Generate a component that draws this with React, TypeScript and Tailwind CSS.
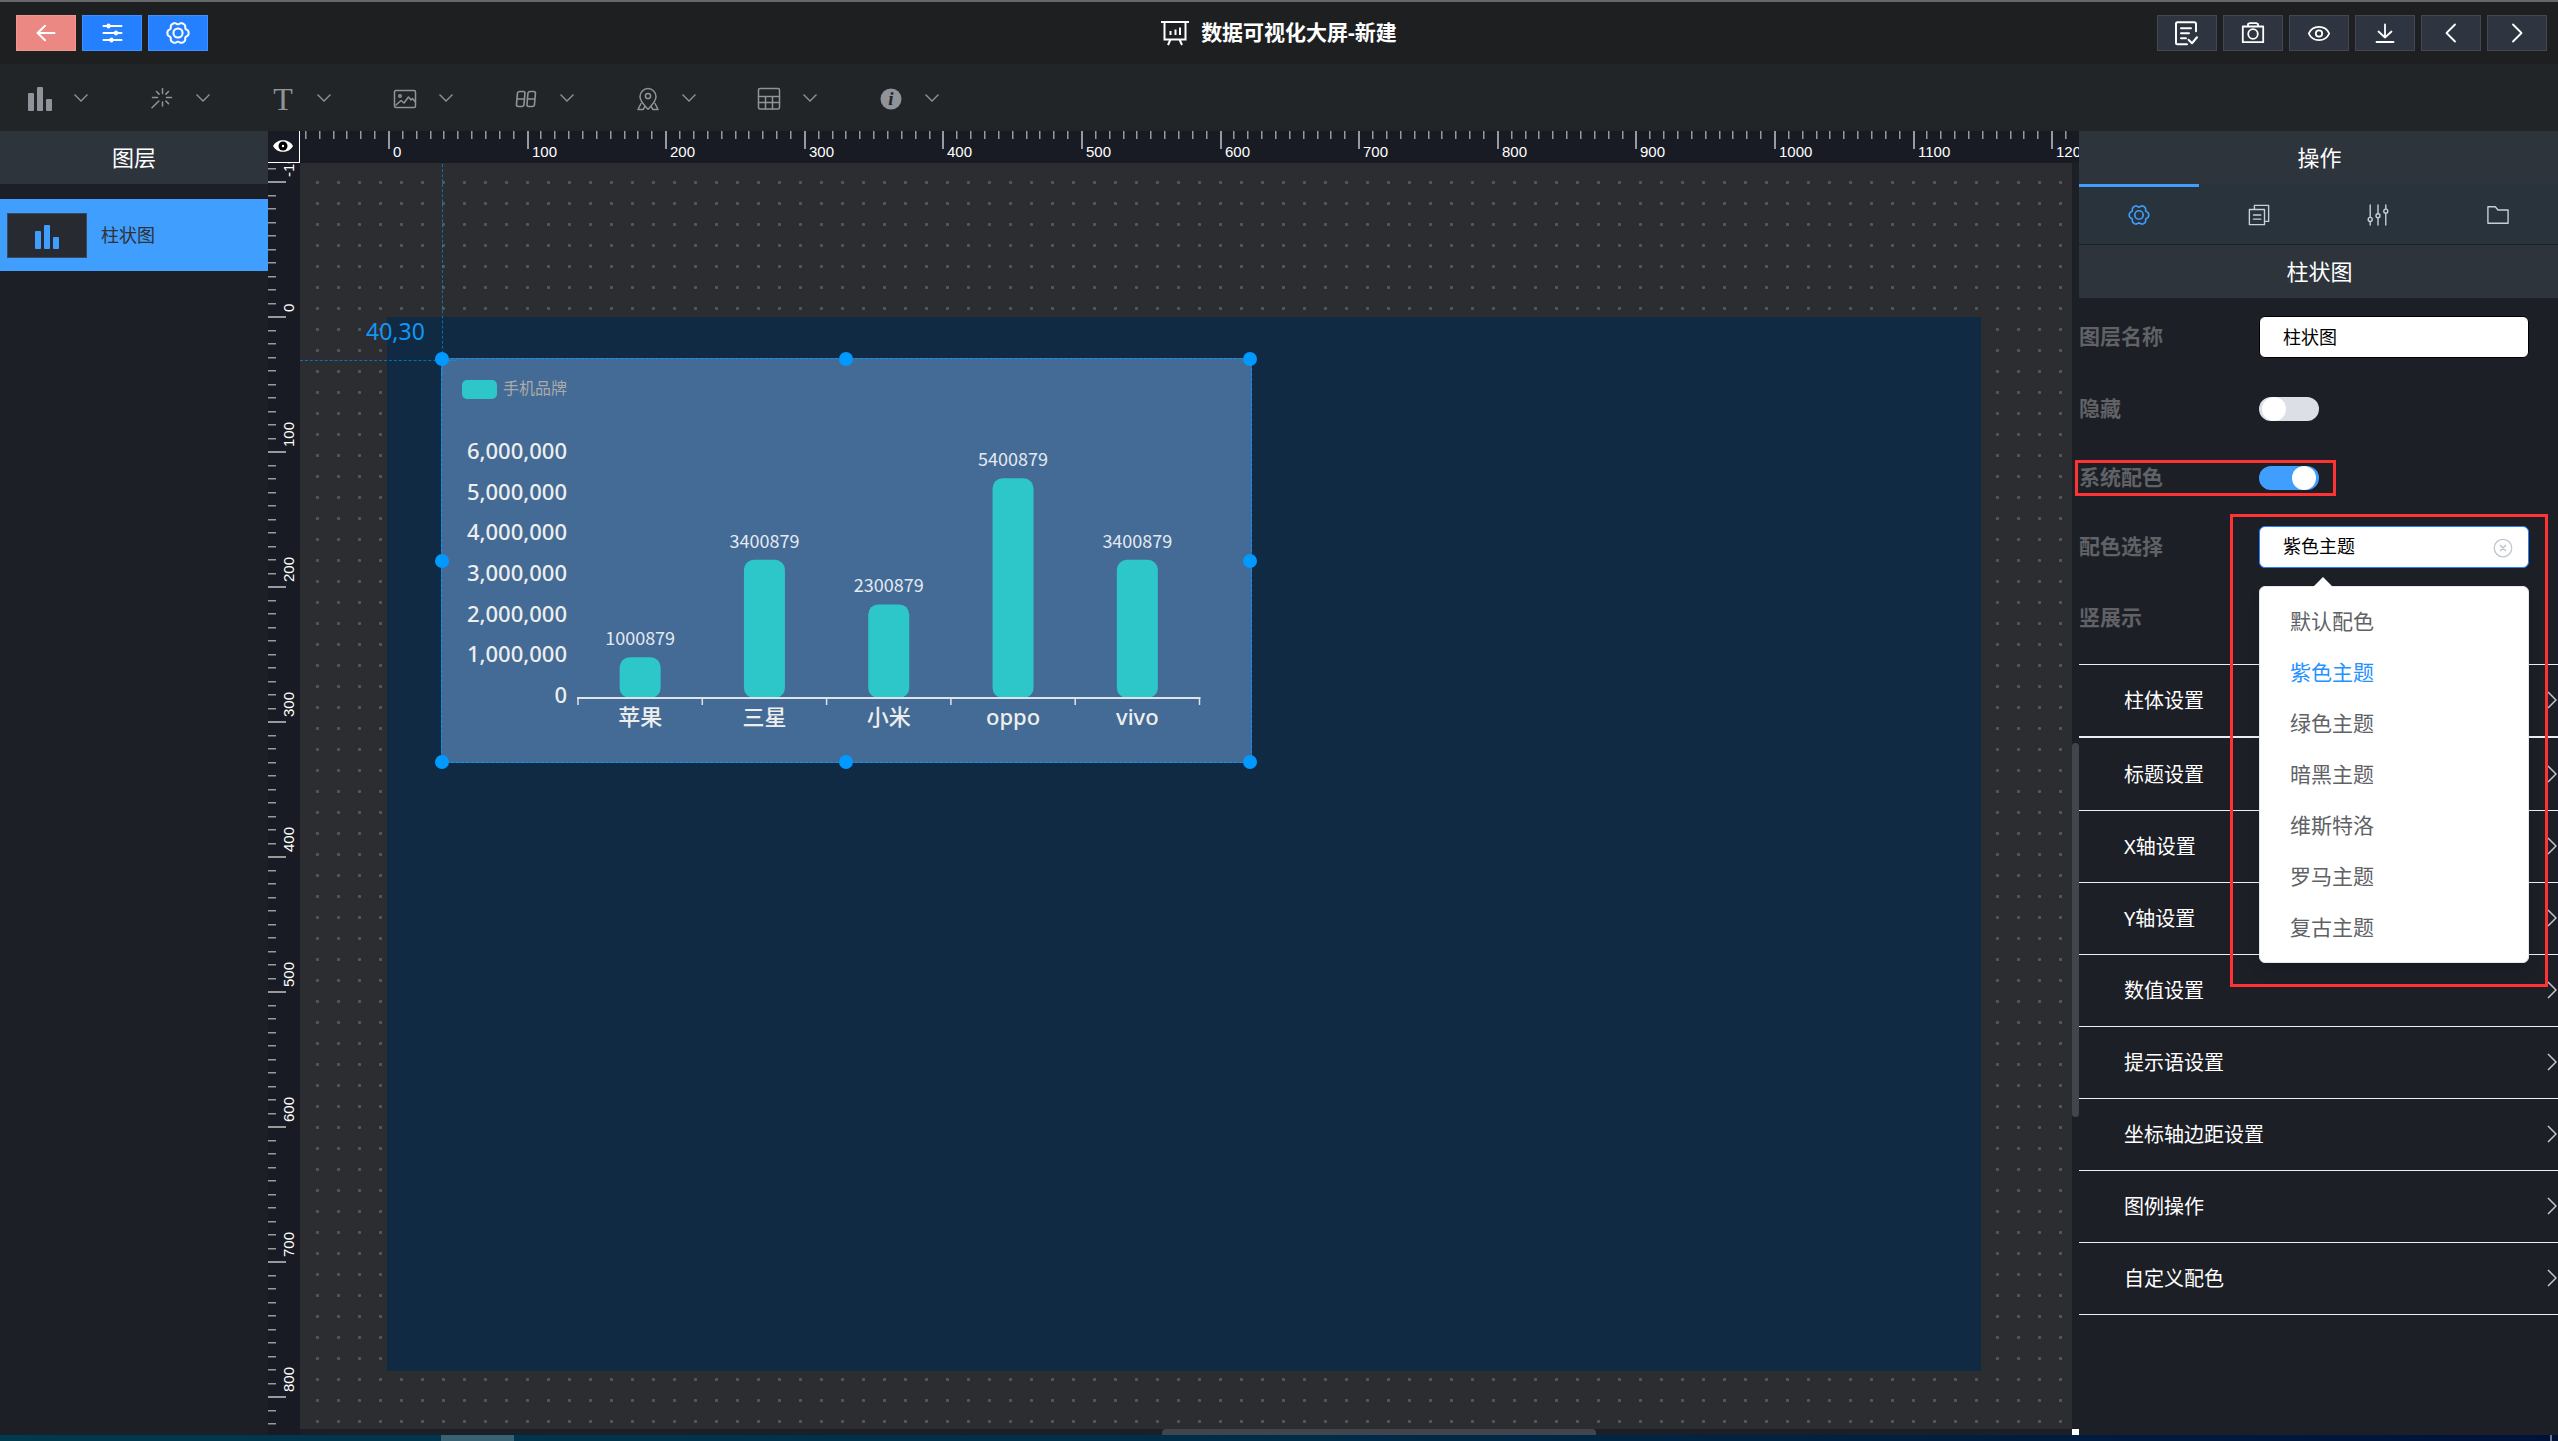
import { useState } from 'react';
import type { ReactNode } from 'react';

type IconProps = { children: ReactNode; className?: string; stroke?: number };

function Icon({ children, className = 'size-6', stroke = 2 }: IconProps) {
  return (
    <svg
      viewBox="0 0 24 24"
      className={className}
      fill="none"
      stroke="currentColor"
      strokeWidth={stroke}
      strokeLinecap="round"
      strokeLinejoin="round"
      aria-hidden="true"
    >
      {children}
    </svg>
  );
}

// six rounded teeth with a notch between each pair
function gearPath() {
  const points: string[] = [];
  for (let deg = 0; deg < 360; deg += 4) {
    const rad = (deg * Math.PI) / 180;
    const notch = Math.pow((1 - Math.cos(6 * rad)) / 2, 2);
    const r = 10.6 - 2 * notch;
    points.push(`${(12 + r * Math.cos(rad)).toFixed(2)} ${(12 + r * Math.sin(rad)).toFixed(2)}`);
  }
  return `M${points.join('L')}Z`;
}

function GearIcon({ stroke = 2, className = 'size-6' }: { stroke?: number; className?: string }) {
  return (
    <Icon stroke={stroke} className={className}>
      <path d={gearPath()} />
      <circle cx="12" cy="12" r="4.6" />
    </Icon>
  );
}

function BarsIcon({ className = 'size-7' }: { className?: string }) {
  return (
    <svg viewBox="0 0 28 28" className={className} fill="currentColor" aria-hidden="true">
      <rect x="2" y="8" width="6" height="18" rx="1" />
      <rect x="11" y="2" width="6" height="24" rx="1" />
      <rect x="20" y="14" width="6" height="12" rx="1" />
    </svg>
  );
}

const tools = [
  { label: '图表', icon: <BarsIcon /> },
  {
    label: '特效',
    icon: (
      <Icon stroke={1.5}>
        <path d="M12.5 1.5v5M12.5 15v4M2.5 10.5h5M16.5 10.5h5M6.5 4.5l2.6 2.6M18.5 4.5l-2.6 2.6M15.9 14l2.6 2.6M8.9 14 2 20.8" />
      </Icon>
    ),
  },
  { label: '文本', icon: <span className="font-[Liberation_Serif,serif] text-[32px] leading-6">T</span> },
  {
    label: '图片',
    icon: (
      <Icon stroke={1.5}>
        <rect x="1.5" y="3.5" width="21" height="17" rx="1.5" />
        <circle cx="7" cy="9" r="1.3" />
        <path d="m3 18 5-4.5 3 2.5 4.5-6 2.5 3 1.5-1.5 2.5 3" />
      </Icon>
    ),
  },
  {
    label: '数字',
    icon: (
      <Icon stroke={1.6}>
        <g transform="translate(1.5 0) skewX(-5)">
          <rect x="2.5" y="4.5" width="7.5" height="15" rx="2" />
          <rect x="13" y="4.5" width="7.5" height="15" rx="2" />
          <path d="M3 12h6.5M13.5 12H20" />
        </g>
      </Icon>
    ),
  },
  {
    label: '地图',
    icon: (
      <Icon stroke={1.5}>
        <path d="M12 22.2c-3-3.4-8-7.4-8-12.6a8 8 0 0 1 16 0c0 5.2-5 9.2-8 12.6Z" />
        <circle cx="12" cy="9" r="2.6" />
        <path d="M5 16.5 2 22.5h5l2-3M19 16.5l3 6h-5l-2-3" />
      </Icon>
    ),
  },
  {
    label: '表格',
    icon: (
      <Icon stroke={1.5}>
        <rect x="1.5" y="1.5" width="21" height="20.5" rx="1.5" />
        <path d="M1.5 9.5h21M1.5 15.5h21M8.5 9.5V22M15.5 9.5V22" />
      </Icon>
    ),
  },
  {
    label: '信息',
    icon: (
      <svg viewBox="0 0 24 24" className="size-6" aria-hidden="true">
        <circle cx="12" cy="12" r="10.5" fill="currentColor" />
        <text x="12" y="18" textAnchor="middle" className="fill-[#222527] font-[Liberation_Serif,serif] text-[19px] font-bold italic">
          i
        </text>
      </svg>
    ),
  },
];

const actions = [
  {
    label: '保存',
    icon: (
      <Icon className="size-7">
        <path
          d="M23 14V6.5A1.5 1.5 0 0 0 21.5 5h-17A1.5 1.5 0 0 0 3 6.5v19A1.5 1.5 0 0 0 4.500 27H14M8 11h10M8 16h8M8 21h5M15.5 22.5 19 26l5-6"
          transform="translate(0 -1.5) scale(.857)"
        />
      </Icon>
    ),
  },
  {
    label: '截图',
    icon: (
      <Icon stroke={1.8}>
        <path d="M1.8 5.5h20.4v15.7H1.8zM7 5.5V3l1.5-.8h7L17 3v2.5" />
        <circle cx="12" cy="13" r="4.8" />
      </Icon>
    ),
  },
  {
    label: '预览',
    icon: (
      <Icon stroke={1.8}>
        <path d="M1.8 12.5C3.5 8.5 7.5 5.8 12 5.8s8.5 2.7 10.2 6.7c-1.7 4-5.7 6.7-10.2 6.7S3.5 16.5 1.8 12.5Z" />
        <circle cx="12" cy="12.5" r="3.2" />
      </Icon>
    ),
  },
  { label: '下载', icon: <Icon stroke={1.8}><path d="M12 3.5v13M5.5 10.5l6.5 6 6.5-6M3.5 21h17" /></Icon> },
  { label: '撤销', icon: <Icon stroke={1.8}><path d="M16 3.5 7.5 12l8.5 8.5" /></Icon> },
  { label: '重做', icon: <Icon stroke={1.8}><path d="m8 3.5 8.5 8.5L8 20.5" /></Icon> },
];

function Header() {
  return (
    <header className="grid h-16 shrink-0 grid-cols-[1fr_auto_1fr] items-center border-t-2 border-[#666769] bg-[#1e1f21] text-white">
      <div className="ml-4 flex gap-1.5">
        <button aria-label="返回" className="flex h-9 w-15 items-center justify-center border border-[#f29490] bg-[#ec8884]">
          <Icon><path d="M20.5 12h-17M11 4.8 3.6 12l7.4 7.2" /></Icon>
        </button>
        <button aria-label="图层" className="flex h-9 w-15 items-center justify-center border border-[#3d90ff] bg-[#2580ff]">
          <Icon>
            <path d="M3.5 5h18M3.5 12h18M3.5 19h18" />
            <path d="M8.5 4.5v1M16 11.5v1M11.5 18.5v1" strokeWidth="4" />
          </Icon>
        </button>
        <button aria-label="设置" className="flex h-9 w-15 items-center justify-center border border-[#3d90ff] bg-[#2580ff]">
          <GearIcon />
        </button>
      </div>
      <h1 className="flex items-center gap-3 text-[21px] font-bold">
        <svg viewBox="0 0 28 28" className="size-7" fill="none" stroke="currentColor" strokeWidth="2" aria-hidden="true">
          <path d="M0 3h28M3.5 3v17.5h21V3M9.5 20.5 7 26M18.5 20.5 21 26M9.5 12v4M14.5 10.5V16M19 8.5V16" />
        </svg>
        数据可视化大屏-新建
      </h1>
      <div className="mr-[11px] flex justify-end gap-1.5">
        {actions.map((a) => (
          <button key={a.label} aria-label={a.label} className="flex h-9 w-15 items-center justify-center border border-[#444752] bg-[#2f3540]">
            {a.icon}
          </button>
        ))}
      </div>
    </header>
  );
}

function Toolbar() {
  return (
    <nav className="h-[67px] shrink-0 bg-[#222527] pt-0.5 text-[#909399]">
      <div className="grid h-full w-[972px] grid-cols-8">
        {tools.map((t) => (
          <button key={t.label} aria-label={t.label} className="flex items-center pl-6">
            <span className="flex w-8 justify-center">{t.icon}</span>
            <svg viewBox="0 0 14 8" className="mb-0.5 ml-[18px] h-2 w-3.5" fill="none" stroke="currentColor" strokeWidth="1.3" aria-hidden="true">
              <path d="M.5.5 7 7 13.5.5" />
            </svg>
          </button>
        ))}
      </div>
    </nav>
  );
}

function LayerPanel() {
  return (
    <aside className="w-67 shrink-0 bg-[#1d1f27]">
      <h2 className="flex h-[53px] items-center justify-center bg-[#2d343c] text-[22px] text-white">图层</h2>
      <button className="mt-[15px] flex h-18 w-full items-center gap-3.5 bg-[#409eff] pl-[7px] text-lg text-[#303133]">
        <span className="flex h-[45px] w-20 items-center justify-center border border-[#3a4a5e] bg-[#282a31] pt-1 text-[#409eff]">
          <BarsIcon />
        </span>
        柱状图
      </button>
    </aside>
  );
}

const ticks = (from: number, to: number) => Array.from({ length: to - from }, (_, i) => i + from);

function HorizontalRuler() {
  return (
    <svg className="h-8 min-w-0 flex-1 bg-[#191b24]" aria-hidden="true">
      {ticks(-6, 129).map((i) => {
        const x = Math.round(88 + i * 13.86);
        const major = i % 10 === 0;
        return (
          <g key={i}>
            <rect x={x} y="0" width={major ? 2 : 1.5} height={major ? 18 : 8} fill="#98999d" />
            {major && (
              <text x={x + 5} y="26" fill="#ffffff" className="font-[Liberation_Sans,sans-serif] text-[15px]">
                {i * 10}
              </text>
            )}
          </g>
        );
      })}
    </svg>
  );
}

function VerticalRuler() {
  return (
    <svg className="min-h-0 w-8 flex-1 bg-[#191b24]" aria-hidden="true">
      {ticks(-11, 83).map((i) => {
        const y = Math.round(153 + i * 13.5);
        const major = i % 10 === 0;
        return (
          <g key={i}>
            <rect x="0" y={y} width={major ? 18 : 8} height={major ? 2 : 1.5} fill="#98999d" />
            {major && (
              <text transform={`translate(26 ${y - 4}) rotate(-90)`} fill="#ffffff" className="font-[Liberation_Sans,sans-serif] text-[15px]">
                {i * 10}
              </text>
            )}
          </g>
        );
      })}
    </svg>
  );
}

const sales = [
  { name: '苹果', value: 1000879 },
  { name: '三星', value: 3400879 },
  { name: '小米', value: 2300879 },
  { name: 'oppo', value: 5400879 },
  { name: 'vivo', value: 3400879 },
];

function BarChart() {
  const left = 136;
  const base = 339;
  const plotHeight = 244;
  const step = 124.3;
  const max = 6000000;
  return (
    <svg viewBox="0 0 809 403" className="size-full" role="img" aria-label="手机品牌">
      <rect x="20" y="21" width="35" height="19" rx="5" fill="#2ec7c9" />
      <text x="61" y="35" fill="#aaaaaa" className="text-base">手机品牌</text>
      {[6, 5, 4, 3, 2, 1, 0].map((m) => (
        <text key={m} x="125" y={base + 5 - (m / 6) * plotHeight} textAnchor="end" fill="#eeeeee" className="text-[22px] font-medium">
          {(m * 1000000).toLocaleString('en-US')}
        </text>
      ))}
      {sales.map((s, i) => {
        const x = left + step * (i + 0.5);
        const h = (s.value / max) * plotHeight;
        return (
          <g key={s.name}>
            <rect x={x - 20.5} y={base - h} width="41" height={h} rx="10" fill="#2ec7c9" />
            <text x={x} y={base - h - 12} textAnchor="middle" fill="#e3e9f2" className="font-[Noto_Sans_CJK_SC,sans-serif] text-lg">
              {s.value}
            </text>
            <text x={x} y={base + 27} textAnchor="middle" fill="#eeeeee" className="text-[22px] font-medium">{s.name}</text>
          </g>
        );
      })}
      <path d={`M${left - 1} ${base}H${left + step * 5 + 1}`} stroke="#dfe4ea" strokeWidth="2" />
      {[0, 1, 2, 3, 4, 5].map((i) => (
        <path key={i} d={`M${left + step * i} ${base}v7`} stroke="#dfe4ea" strokeWidth="1.5" />
      ))}
    </svg>
  );
}

const handles = [
  'left-0 top-0',
  'left-[404px] top-0',
  'left-[808px] top-0',
  'left-0 top-1/2',
  'left-[808px] top-1/2',
  'left-0 top-full',
  'left-[404px] top-full',
  'left-[808px] top-full',
];

function Canvas() {
  return (
    <div className="relative min-w-0 flex-1 overflow-hidden bg-[#2b2d31] bg-[radial-gradient(circle_at_center,#4e595e_1.3px,transparent_2px)] bg-[length:21px_21px] bg-[position:7px_9px] pt-[154px] pr-[91px] pb-[58px] pl-[87px]">
      <div className="relative h-full bg-[#0f2a42]">
        {/* selected chart with its guides */}
        <div className="absolute top-[41px] left-[54px] h-[405px] w-[811px] border border-dashed border-[#0099ff] bg-[#436b95]">
          <BarChart />
          <span className="absolute -top-[195px] left-0 h-[210px] border-l border-dashed border-[#0099ff]/60" />
          <span className="absolute top-px -left-[142px] w-[156px] border-t border-dashed border-[#0099ff]/60" />
          <span className="absolute -top-[45px] -left-[76px] text-[23px] text-[#1296f8]">40,30</span>
          {handles.map((pos) => (
            <span key={pos} className={`absolute size-3.5 -translate-x-1/2 -translate-y-1/2 rounded-full bg-[#0099ff] ${pos}`} />
          ))}
        </div>
      </div>
    </div>
  );
}

function Workspace() {
  return (
    <main className="flex min-w-0 flex-1 flex-col bg-[#1d1f27]">
      <div className="flex h-8 shrink-0">
        <button aria-label="显示参考线" className="flex w-8 items-center justify-center border-r border-b border-white bg-[#191b24] pr-0.5 pb-0.5">
          <svg viewBox="0 0 22 14" className="h-3.5 w-5.5" aria-hidden="true">
            <path d="M1 7C5-.8 17-.8 21 7 17 14.8 5 14.8 1 7Z" fill="#fff" />
            <circle cx="11" cy="7" r="4.5" fill="#000" />
            <circle cx="11" cy="7" r="1.2" fill="#fff" />
          </svg>
        </button>
        <HorizontalRuler />
      </div>
      <div className="flex min-h-0 flex-1">
        <div className="flex w-8 shrink-0 flex-col">
          <VerticalRuler />
        </div>
        <div className="flex min-w-0 flex-1 flex-col">
          <div className="flex min-h-0 flex-1">
            <Canvas />
            <div className="w-[7px] shrink-0 pt-[580px]">
              <div className="h-[374px] rounded-full bg-[#42454c]" />
            </div>
          </div>
          <div className="flex h-1.5 shrink-0 justify-between">
            <div className="ml-[862px] w-[434px] rounded-t-sm bg-[#42454c]" />
            <div className="w-[7px] bg-white" />
          </div>
        </div>
      </div>
    </main>
  );
}

function Switch({ id, defaultChecked }: { id: string; defaultChecked?: boolean }) {
  return (
    <span className="relative flex h-6 w-15">
      <input
        id={id}
        type="checkbox"
        role="switch"
        defaultChecked={defaultChecked}
        className="peer h-6 w-15 appearance-none rounded-full bg-[#dcdfe6] checked:bg-[#409eff]"
      />
      <span className="pointer-events-none absolute top-0 left-[3px] size-6 rounded-full bg-white peer-checked:left-[33px]" />
    </span>
  );
}

function Field({ id, label, className = '', children }: { id: string; label: string; className?: string; children?: ReactNode }) {
  return (
    <div className={`relative flex h-[42px] items-center ${className}`}>
      <label htmlFor={id} className="w-45 text-[21px] font-bold text-[#606266]">{label}</label>
      {children}
    </div>
  );
}

const themes = ['默认配色', '紫色主题', '绿色主题', '暗黑主题', '维斯特洛', '罗马主题', '复古主题'];

function ThemeSelect({ id }: { id: string }) {
  const [theme, setTheme] = useState('紫色主题');
  return (
    <div className="relative w-[270px]">
      <select
        id={id}
        value={theme}
        onChange={(e) => setTheme(e.target.value)}
        className="block h-[42px] w-full appearance-none rounded-md border border-[#2580ff] bg-white px-[23px] pb-0.5 text-lg text-black"
      >
        {themes.map((t) => <option key={t}>{t}</option>)}
      </select>
      <button aria-label="清除" className="absolute top-3 right-4 text-[#c0c4cc]">
        <Icon className="size-5" stroke={1.5}>
          <circle cx="12" cy="12" r="10.5" />
          <path d="m9 9 6 6M15 9l-6 6" strokeWidth="2" />
        </Icon>
      </button>
      <div className="absolute top-15 left-0 z-10 w-full rounded-md border border-[#e4e7ed] bg-white py-[9px] shadow-lg">
        <span className="absolute -top-[7px] left-14 size-3.5 rotate-45 bg-white" />
        <ul role="listbox" aria-label="配色选择" className="relative">
          {themes.map((t) => (
            <li
              key={t}
              role="option"
              aria-selected={t === theme}
              onClick={() => setTheme(t)}
              className={`flex h-[51px] items-center pt-px pl-[30px] text-[21px] ${t === theme ? 'text-[#2590ff]' : 'text-[#606266]'}`}
            >
              {t}
            </li>
          ))}
        </ul>
      </div>
    </div>
  );
}

function Section({ title }: { title: string }) {
  return (
    <button className="flex h-18 w-full items-center justify-between border-b border-[#ebeef5] pl-[45px] text-xl text-white">
      {title}
      <svg viewBox="0 0 10 18" className="mr-px mb-0.5 h-[18px] w-2.5" fill="none" stroke="#c5c8ce" strokeWidth="1.5" aria-hidden="true">
        <path d="m1 1 8 8-8 8" />
      </svg>
    </button>
  );
}

const tabs = [
  { label: '配置', icon: <GearIcon stroke={1.8} className="size-[22px]" /> },
  {
    label: '数据',
    icon: (
      <Icon className="size-[22px]" stroke={1.5}>
        <path d="M1.5 6H18v16.5H1.5zM7 6V1.5h15.5V19H18M6 12h8M6 16.5h8" />
      </Icon>
    ),
  },
  {
    label: '交互',
    icon: (
      <Icon className="size-[22px]" stroke={1.5}>
        <path d="M3.5 1v13.5M3.5 19v4M12 1v9.5M12 15v8M20.5 1v4.5M20.5 10v13" />
        <circle cx="3.5" cy="16.8" r="2.2" />
        <circle cx="12" cy="12.8" r="2.2" />
        <circle cx="20.5" cy="7.8" r="2.2" />
      </Icon>
    ),
  },
  { label: '参数', icon: <Icon className="size-[22px]" stroke={1.5}><path d="M1 3h8l3 3.5h11V21H1z" /></Icon> },
];

function SettingsPanel() {
  return (
    <aside className="w-[479px] shrink-0 bg-[#1d1f27]">
      <h2 className="flex h-[53px] items-center justify-center bg-[#2d343c] pl-0.5 text-[22px] text-white">操作</h2>
      <div role="tablist" className="grid h-[61px] grid-cols-4 border-b border-[#1d1f27] bg-[#28333b]">
        {tabs.map((t, i) => (
          <button
            key={t.label}
            role="tab"
            aria-label={t.label}
            aria-selected={i === 0}
            className={`flex items-center justify-center border-t-[3px] pb-0.5 ${i === 0 ? 'border-[#409eff] text-[#409eff]' : 'border-transparent text-[#c8d0d8]'}`}
          >
            {t.icon}
          </button>
        ))}
      </div>
      <h3 className="flex h-[53px] items-center justify-center bg-[#2d343c] pl-0.5 text-[22px] text-white">柱状图</h3>
      <form className="flex flex-col gap-7 pt-[18px] pb-[26px]">
        <Field id="layer-name" label="图层名称">
          <input
            id="layer-name"
            defaultValue="柱状图"
            className="h-[42px] w-[270px] rounded-md border border-black bg-white px-[23px] pb-0.5 text-lg text-black"
          />
        </Field>
        <Field id="hidden" label="隐藏" className="pt-1">
          <Switch id="hidden" />
        </Field>
        <Field id="system-color" label="系统配色" className="pt-0.5">
          <Switch id="system-color" defaultChecked />
          <span className="pointer-events-none absolute top-1 -left-1 h-9 w-[261px] border-3 border-[#ff3333]" />
        </Field>
        <Field id="theme" label="配色选择">
          <ThemeSelect id="theme" />
          <span className="pointer-events-none absolute -top-3 left-[151px] z-20 h-[473px] w-[318px] border-3 border-[#ff3333]" />
        </Field>
        <Field id="vertical" label="竖展示" className="pt-0.5">
          <Switch id="vertical" />
        </Field>
      </form>
      <div className="border-t border-[#ebeef5]">
        <Section title="柱体设置" />
      </div>
      <div className="border-t border-[#ebeef5] pt-px">
        {['标题设置', 'X轴设置', 'Y轴设置', '数值设置', '提示语设置', '坐标轴边距设置', '图例操作', '自定义配色'].map((t) => (
          <Section key={t} title={t} />
        ))}
      </div>
    </aside>
  );
}

export default function App() {
  return (
    <div className="flex h-screen flex-col overflow-hidden bg-[#1d1f27] font-['Noto_Sans','Noto_Sans_CJK_SC',sans-serif]">
      <Header />
      <Toolbar />
      <div className="flex min-h-0 flex-1">
        <LayerPanel />
        <Workspace />
        <SettingsPanel />
      </div>
      <footer className="flex h-1.5 shrink-0 justify-between bg-linear-to-r from-[#003a4f] via-[#002c4a] to-[#001238]">
        <span className="ml-[441px] w-[73px] bg-[#386274]" />
        <span className="mr-1.5 w-0.5 bg-[#6b7590]" />
      </footer>
    </div>
  );
}
